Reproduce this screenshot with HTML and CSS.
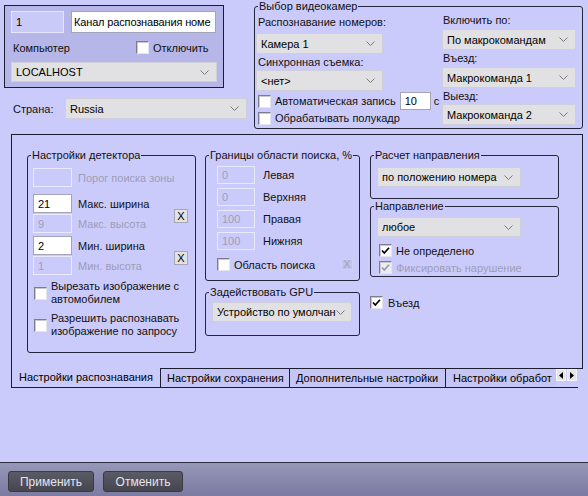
FILE: index.html
```html
<!DOCTYPE html>
<html lang="ru">
<head>
  <meta charset="UTF-8" />
  <title>Канал распознавания номеров</title>
  <link rel="stylesheet" href="styles.css">
</head>
<body>
<div class="window">

  <!-- Top: channel + cameras -->
  <div class="top">
    <div class="left-col">
      <div class="channel">
        <div class="channel-row">
          <input class="field field-id" value="1">
          <input class="field field-name" value="Канал распознавания номе">
        </div>
        <div class="channel-row computer">
          <span class="computer-label">Компьютер</span>
          <label class="check"><span class="box"></span>Отключить</label>
        </div>
        <div class="combo combo-host"><span>LOCALHOST</span><svg class="chev" width="9" height="5" viewBox="0 0 9 5"><path d="M.5 .5 4.5 4.5 8.5 .5"/></svg></div>
      </div>
      <div class="country">
        <span class="country-label">Страна:</span>
        <div class="combo combo-country"><span>Russia</span><svg class="chev" width="9" height="5" viewBox="0 0 9 5"><path d="M.5 .5 4.5 4.5 8.5 .5"/></svg></div>
      </div>
    </div>

    <fieldset class="group cams">
      <legend>Выбор видеокамер</legend>
      <div class="cams-body">
        <div class="cams-left">
          <div class="cap cap-first">Распознавание номеров:</div>
          <div class="combo combo-cam"><span>Камера 1</span><svg class="chev" width="9" height="5" viewBox="0 0 9 5"><path d="M.5 .5 4.5 4.5 8.5 .5"/></svg></div>
          <div class="cap cap-sync">Синхронная съемка:</div>
          <div class="combo combo-cam"><span>&lt;нет&gt;</span><svg class="chev" width="9" height="5" viewBox="0 0 9 5"><path d="M.5 .5 4.5 4.5 8.5 .5"/></svg></div>
          <div class="cam-check rec">
            <label class="check"><span class="box"></span>Автоматическая запись</label>
            <input class="field field-sec" value="10">
            <span class="sec">с</span>
          </div>
          <div class="cam-check half">
            <label class="check"><span class="box"></span>Обрабатывать полукадр</label>
          </div>
        </div>
        <div class="cams-right">
          <div class="cap cap-r">Включить по:</div>
          <div class="combo combo-macro"><span>По макрокомандам</span><svg class="chev" width="9" height="5" viewBox="0 0 9 5"><path d="M.5 .5 4.5 4.5 8.5 .5"/></svg></div>
          <div class="cap cap-r">Въезд:</div>
          <div class="combo combo-macro"><span>Макрокоманда 1</span><svg class="chev" width="9" height="5" viewBox="0 0 9 5"><path d="M.5 .5 4.5 4.5 8.5 .5"/></svg></div>
          <div class="cap cap-r last">Выезд:</div>
          <div class="combo combo-macro"><span>Макрокоманда 2</span><svg class="chev" width="9" height="5" viewBox="0 0 9 5"><path d="M.5 .5 4.5 4.5 8.5 .5"/></svg></div>
        </div>
      </div>
    </fieldset>
  </div>

  <!-- Tabs -->
  <div class="tabs">
    <div class="tab-page">

      <div class="col col-detector">
        <fieldset class="group detector">
          <legend>Настройки детектора</legend>
          <div class="param first"><input class="field small off"><span class="param-label off-text">Порог поиска зоны</span></div>
          <div class="pair">
            <div class="pair-rows">
              <div class="param"><input class="field small" value="21"><span class="param-label">Макс. ширина</span></div>
              <div class="param second"><input class="field small off" value="9"><span class="param-label off-text">Макс. высота</span></div>
            </div>
            <button class="xbtn">X</button>
          </div>
          <div class="pair pair-min">
            <div class="pair-rows">
              <div class="param"><input class="field small" value="2"><span class="param-label">Мин. ширина</span></div>
              <div class="param second"><input class="field small off" value="1"><span class="param-label off-text">Мин. высота</span></div>
            </div>
            <button class="xbtn">X</button>
          </div>
          <label class="check multi cut"><span class="box"></span><span>Вырезать изображение с<br>автомобилем</span></label>
          <label class="check multi req"><span class="box"></span><span>Разрешить распознавать<br>изображение по запросу</span></label>
        </fieldset>
      </div>

      <div class="col col-bounds">
        <fieldset class="group bounds">
          <legend>Границы области поиска, %</legend>
          <div class="bound first"><input class="field bnd off" value="0"><span class="bound-label">Левая</span></div>
          <div class="bound"><input class="field bnd off" value="0"><span class="bound-label">Верхняя</span></div>
          <div class="bound"><input class="field bnd off" value="100"><span class="bound-label">Правая</span></div>
          <div class="bound"><input class="field bnd off" value="100"><span class="bound-label">Нижняя</span></div>
          <div class="bound-check">
            <label class="check"><span class="box"></span>Область поиска</label>
            <button class="xbtn off">X</button>
          </div>
        </fieldset>
        <fieldset class="group gpu">
          <legend>Задействовать GPU</legend>
          <div class="combo combo-gpu"><span>Устройство по умолчан</span><svg class="chev" width="9" height="5" viewBox="0 0 9 5"><path d="M.5 .5 4.5 4.5 8.5 .5"/></svg></div>
        </fieldset>
      </div>

      <div class="col col-dir">
        <fieldset class="group calc">
          <legend>Расчет направления</legend>
          <div class="combo combo-dir"><span>по положению номера</span><svg class="chev" width="9" height="5" viewBox="0 0 9 5"><path d="M.5 .5 4.5 4.5 8.5 .5"/></svg></div>
        </fieldset>
        <fieldset class="group direction">
          <legend>Направление</legend>
          <div class="combo combo-dir"><span>любое</span><svg class="chev" width="9" height="5" viewBox="0 0 9 5"><path d="M.5 .5 4.5 4.5 8.5 .5"/></svg></div>
          <label class="check dir-check"><span class="box"><svg class="tick" width="11" height="11" viewBox="0 0 11 11"><path d="M2 5.5 4.3 8 9 2.8"/></svg></span>Не определено</label>
          <label class="check dir-check off-text"><span class="box box-off"><svg class="tick" width="11" height="11" viewBox="0 0 11 11"><path d="M2 5.5 4.3 8 9 2.8"/></svg></span>Фиксировать нарушение</label>
        </fieldset>
        <label class="check entry"><span class="box"><svg class="tick" width="11" height="11" viewBox="0 0 11 11"><path d="M2 5.5 4.3 8 9 2.8"/></svg></span>Въезд</label>
      </div>

    </div>
    <div class="tab-strip">
      <div class="tab active">Настройки распознавания</div>
      <div class="tab">Настройки сохранения</div>
      <div class="tab">Дополнительные настройки</div>
      <div class="tab last">Настройки обработ</div>
      <div class="scroll-btn"><svg width="4" height="7" viewBox="0 0 4 7"><path d="M4 0 0 3.5 4 7z"/></svg></div>
      <div class="scroll-btn"><svg width="4" height="7" viewBox="0 0 4 7"><path d="M0 0 4 3.5 0 7z"/></svg></div>
    </div>
  </div>

  <div class="spacer"></div>

  <!-- Bottom bar -->
  <div class="footer">
    <button class="btn btn-apply">Применить</button>
    <button class="btn btn-cancel">Отменить</button>
  </div>

</div>
</body>
</html>
```

FILE: styles.css
```css
* { margin: 0; padding: 0; box-sizing: border-box; }
html, body {
  width: 100%;
  height: 100%;
  overflow: hidden;
}

body {
  background: #cbcbfb;
  font-family: "Liberation Sans", Arial, sans-serif;
  font-size: 11px;
  color: #111;
}

.window {
  display: flex;
  flex-direction: column;
  height: 496px;
}

/* ---- shared controls ---- */
.field {
  display: block;
  height: 22px;
  border: 1px solid #a4a4b8;
  background: #fff;
  font: inherit;
  color: #000;
  padding: 0 4px;
  outline: none;
}

.field.off {
  background: transparent;
  border-color: #e9e9fb;
  color: #9d9db6;
}

.off-text { color: #9d9db6; }

.combo {
  display: flex;
  align-items: center;
  justify-content: space-between;
  height: 21px;
  padding: 0 7px 0 4px;
  background: #e1e1e3;
  border: 1px solid #cfcfdb;
  color: #000;
  white-space: nowrap;
  overflow: hidden;
}

.chev { flex: none; }
.chev path { fill: none; stroke: #7a7a7a; stroke-width: 1; }

.check {
  display: flex;
  align-items: center;
  gap: 4px;
  white-space: nowrap;
}

.box {
  flex: none;
  position: relative;
  width: 13px;
  height: 13px;
  background: #fff;
  border: 1px solid;
  border-color: #7c7c8c #e4e4ee #e4e4ee #7c7c8c;
  box-shadow: inset 1px 1px 0 #c8c8d0;
}

.box-off { background: #ececf2; }

.tick {
  position: absolute;
  top: 0;
  left: 0;
}
.tick path { fill: none; stroke: #000; stroke-width: 1.7; }
.box-off .tick path { stroke: #9a9aa8; }

.xbtn {
  width: 14px;
  height: 14px;
  border: 1px solid #a8a8b4;
  background: #e2e2e6;
  font: inherit;
  font-size: 11px;
  line-height: 12px;
  color: #000;
}

.xbtn.off {
  width: 12px;
  height: 11px;
  line-height: 9px;
  color: #a0a0b0;
  background: #c2c3ee;
  border-color: #d0d0f0;
}

.group {
  border: 1px solid #24243a;
  border-radius: 3px;
  padding: 0;
  min-width: 0;
}

.group legend {
  margin-left: 3px;
  padding: 0 1px;
  line-height: 12px;
}

/* ---- top area ---- */
.top {
  display: flex;
  align-items: flex-start;
  height: 129px;
}

.left-col { width: 247px; flex: none; }

.channel {
  margin: 5px 0 0 4px;
  width: 220px;
  height: 83px;
  border: 1px solid #1d1d30;
  background: #b6b7e8;
  padding: 5px 6px 0;
}

.channel-row {
  display: flex;
  align-items: center;
  gap: 7px;
}

.field-id {
  width: 53px;
  background: #c9caf7;
  border-color: #e6e6fb;
}

.field-name { width: 145px; padding: 0 0 0 2px; letter-spacing: -0.15px; }

.computer { height: 29px; gap: 0; }
.computer-label { width: 125px; padding-left: 2px; }

.combo-host { width: 206px; height: 20px; }

.country {
  display: flex;
  align-items: center;
  margin-top: 10px;
  padding-left: 13px;
}

.country-label { width: 52px; }
.combo-country { width: 182px; }

.cams {
  margin-left: 7px;
  width: 329px;
  height: 129px;
}

.cams-body {
  display: flex;
  padding: 0 6px 0 1px;
}

.cams-left { width: 186px; }
.cams-right { width: 134px; }

.cap { height: 16px; line-height: 16px; padding-left: 2px; }
.cap-first { height: 20px; line-height: 20px; margin-bottom: 1px; }
.cap-r { height: 17px; line-height: 17px; padding-left: 1px; }
.cap-r.last { height: 16px; line-height: 16px; }

.combo-cam { width: 127px; }
.combo-macro { width: 134px; }

.cam-check {
  display: flex;
  align-items: center;
  padding-left: 2px;
}
.cam-check.rec { height: 18px; margin-top: 1px; }
.cam-check.half { height: 16px; }

.field-sec {
  width: 31px;
  height: 18px;
  margin-left: 4px;
}

.sec { margin-left: 3px; }

/* ---- tabs ---- */
.tabs {
  margin: 5px 0 0 11px;
  width: 572px;
}

.tab-page {
  display: flex;
  align-items: flex-start;
  height: 235px;
  border: 1px solid #1d1d30;
  padding: 14px 0 0 15px;
}

.col { display: flex; flex-direction: column; }
.col-detector { width: 169px; }
.col-bounds { width: 155px; margin-left: 9px; }
.col-dir { width: 189px; margin-left: 10px; }

.detector { height: 204px; }

.param {
  display: flex;
  align-items: center;
  height: 19px;
  padding-left: 5px;
}
.param.first { margin-top: 7px; }
.param.second { margin-top: 1px; }

.field.small { width: 39px; height: 19px; }
.param-label { margin-left: 6px; white-space: nowrap; }

.pair {
  display: flex;
  align-items: flex-start;
  margin-top: 7px;
}
.pair-min { margin-top: 3px; }
.pair .xbtn { margin: 15px 7px 0 auto; }

.check.multi {
  align-items: center;
  padding-left: 6px;
  line-height: 13px;
}
.check.cut { margin-top: 5px; }
.check.req { margin-top: 6px; }

.bounds { height: 132px; }

.bound {
  display: flex;
  align-items: center;
  height: 18px;
  padding-left: 11px;
  margin-top: 4px;
}
.bound.first { margin-top: 5px; }

.field.bnd { width: 38px; height: 18px; }
.bound-label { margin-left: 8px; }

.bound-check {
  display: flex;
  align-items: center;
  height: 15px;
  margin-top: 7px;
  padding-left: 11px;
}
.bound-check .xbtn { margin: 0 6px 0 auto; }

.gpu { height: 50px; margin-top: 5px; }
.combo-gpu { width: 140px; height: 20px; margin: 4px 0 0 6px; }

.calc { height: 50px; }
.combo-dir { width: 144px; height: 20px; margin: 6px 0 0 6px; }

.direction { height: 77px; margin-top: 1px; }
.direction .combo-dir { margin-top: 5px; }

.dir-check { height: 13px; padding-left: 8px; margin-top: 7px; }
.dir-check + .dir-check { margin-top: 4px; }

.entry { height: 13px; margin-top: 19px; gap: 5px; }

.tab-strip {
  display: flex;
  width: 567px;
  height: 19px;
  border-bottom: 1px solid #1d1d30;
}

.tab {
  height: 18px;
  line-height: 18px;
  padding-left: 6px;
  border-right: 1px solid #1d1d30;
  background: #c5c6f5;
  white-space: nowrap;
  overflow: hidden;
  color: #000;
}

.tab.active {
  width: 150px;
  height: 19px;
  margin-top: -1px;
  line-height: 19px;
  padding-left: 7px;
  background: #cbcbfb;
  border-left: 1px solid #1d1d30;
}

.tab:nth-child(2) { width: 129px; }
.tab:nth-child(3) { width: 156px; }
.tab.last { width: 110px; border-right: 0; padding-left: 7px; }

.scroll-btn {
  display: flex;
  align-items: center;
  justify-content: center;
  width: 10px;
  height: 12px;
  margin-right: 1px;
  background: #e6e6ea;
  border: 1px solid #f4f4f8;
}
.scroll-btn path { fill: #000; }

/* ---- bottom bar ---- */
.spacer { flex: 1; }

.footer {
  display: flex;
  gap: 9px;
  height: 34px;
  padding: 8px 0 0 8px;
  border-top: 1px solid #2b2b3b;
  background: linear-gradient(#9797b8, #7b7ba3);
}

.btn {
  height: 21px;
  border: 1px solid #3a3a46;
  border-radius: 3px;
  background: linear-gradient(#5b5b66, #46464f);
  color: #e4e4ee;
  font: inherit;
  font-size: 12px;
}

.btn-apply { width: 86px; }
.btn-cancel { width: 80px; }
```
